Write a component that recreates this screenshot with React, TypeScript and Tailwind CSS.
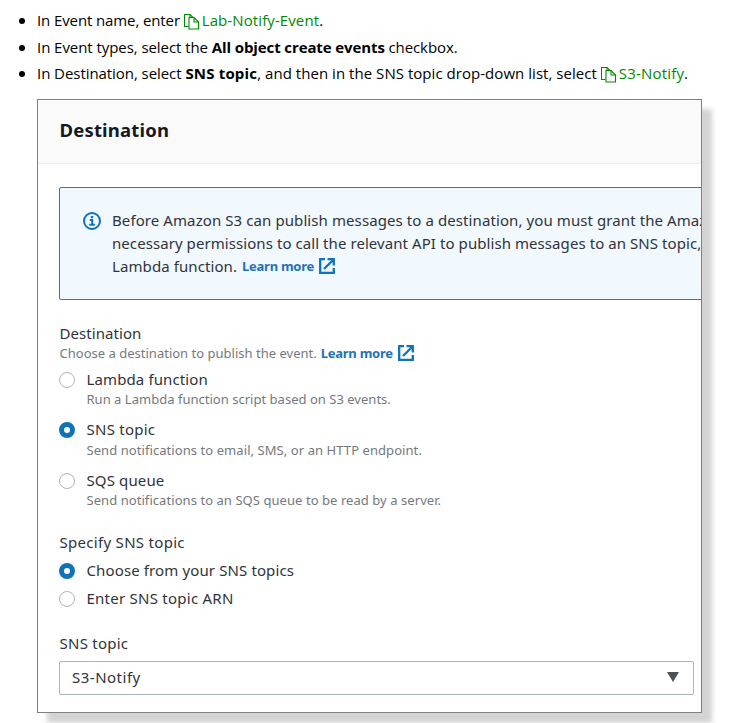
import type { ReactNode } from 'react';

function CopyIcon() {
  return (
    <svg
      className="mr-[2px] inline-block h-[17px] w-[16px] align-[-4px]"
      viewBox="0 0 16 17"
      fill="none"
      stroke="#008a00"
      strokeWidth="1.1"
    >
      <path d="M4.5 13.5H0.5V1.5H6L9 4.5" />
      <path d="M6 1.5V4.5" />
      <path d="M5 4.5H10L14.5 9V16H5Z" />
      <path d="M10 4.5V9H14.5" />
    </svg>
  );
}

function ExternalIcon() {
  return (
    <svg
      className="ml-[5px] h-4 w-4 shrink-0"
      viewBox="0 0 16 16"
      fill="none"
      stroke="#0f73bb"
      strokeWidth="2.3"
    >
      <path d="M6 1.2H1.2V14.8H14.8V10" />
      <path d="M8.5 1.2H14.8V7.5M14.8 1.2L5 11" />
    </svg>
  );
}

function InfoIcon() {
  return (
    <svg className="mt-[3px] h-[18px] w-[18px] shrink-0" viewBox="0 0 18 18" fill="none" stroke="#0f73bb">
      <circle cx="9" cy="9" r="8" strokeWidth="2" />
      <path d="M9 4V6.2" strokeWidth="2.4" />
      <path d="M6.8 8H9.2V12.8M6.3 12.8H11.9" strokeWidth="2" />
    </svg>
  );
}

function LearnMore() {
  return (
    <a className="flex items-center text-[13px] font-bold tracking-[-0.26px] text-[#1f72b4]">
      Learn more
      <ExternalIcon />
    </a>
  );
}

function Radio({ label, checked, hint }: { label: ReactNode; checked?: boolean; hint?: ReactNode }) {
  return (
    <div className="flex">
      <span
        className={
          checked
            ? 'mt-[3px] h-4 w-4 shrink-0 rounded-full border-[5px] border-[#0f73b5] bg-white'
            : 'mt-[3px] h-4 w-4 shrink-0 rounded-full border border-[#b0b6b7] bg-white'
        }
      />
      <div className="ml-[11.5px]">
        <div className="text-[15px] leading-[21px] tracking-[0.12px]">{label}</div>
        {hint && <div className="-mt-[0.6px] mb-[0.6px] text-[13px] leading-[20px] text-[#75797d]">{hint}</div>}
      </div>
    </div>
  );
}

function Bullet({ children, className }: { children: ReactNode; className: string }) {
  return (
    <li className={`flex items-center whitespace-pre ${className}`}>
      <span className="mt-[1px] mr-[12px] ml-[19px] h-[6px] w-[6px] rounded-full bg-black" />
      <div>{children}</div>
    </li>
  );
}

export default function App() {
  return (
    <div className="h-[723px] w-[743px] overflow-hidden bg-white pt-[7px] font-['Noto_Sans',sans-serif] text-black">
      <ul className="font-['Open_Sans','Noto_Sans',sans-serif] text-[15px]">
        <Bullet className="h-[27px] leading-[27px]">
          <span className="tracking-[-0.11px]">In Event name, enter </span>
          <span className="tracking-[0.1px] text-[#008a00]">
            <CopyIcon />
            Lab-Notify-Event
          </span>
          .
        </Bullet>
        <Bullet className="h-[26px] leading-[26px]">
          <span className="tracking-[-0.06px]">In Event types, select the </span>
          <b className="font-bold tracking-[-0.11px]">All object create events</b>
          <span className="tracking-[-0.1px]"> checkbox.</span>
        </Bullet>
        <Bullet className="h-[26px] leading-[26px]">
          <span className="tracking-[-0.06px]">In Destination, select </span>
          <b className="font-bold tracking-[0.18px]">SNS topic</b>
          <span className="tracking-[0.04px]">, and then in the SNS topic drop-down list, select </span>
          <span className="tracking-[0.18px] text-[#008a00]">
            <CopyIcon />
            S3-Notify
          </span>
          .
        </Bullet>
      </ul>

      <section className="mt-[13px] ml-[37px] h-[614px] w-[665px] border border-[#808080] bg-white text-[#30343a] shadow-[10px_10px_5px_#d3d3d3]">
        <div className="h-full overflow-hidden">
          <header className="flex h-[64px] items-center border-b border-[#eaeded] bg-[#fafafa] pb-[3px] pl-[21.5px]">
            <h2 className="text-[18.5px] leading-6 font-bold tracking-[0.18px] text-[#16191f]">Destination</h2>
          </header>

          <div className="mt-[23px] ml-[21px] flex h-[112.5px] w-[700px] rounded-[2px] border border-[#2180b4] bg-[#f1f8fe] pt-[21px] pl-[23px]">
            <InfoIcon />
            <div className="ml-[11px] text-[15px] leading-[22.6px] whitespace-nowrap">
              <p className="tracking-[0.09px]">
                Before Amazon S3 can publish messages to a destination, you must grant the Amaz
              </p>
              <p className="tracking-[0.07px]">
                necessary permissions to call the relevant API to publish messages to an SNS topic,
              </p>
              <p className="mt-[0.8px] flex gap-[5px] tracking-[0.09px]">
                Lambda function. <LearnMore />
              </p>
            </div>
          </div>

          <div className="pt-[22.5px] pl-[21px]">
            <div className="pl-[0.5px] text-[15px] leading-[22px] tracking-[0.06px]">Destination</div>
            <div className="-mt-[1px] flex gap-[4px] pl-[0.5px] text-[13px] leading-[20px] tracking-[0.01px] text-[#75797d]">
              Choose a destination to publish the event.
              <LearnMore />
            </div>
            <div className="mt-[5.7px] flex flex-col gap-[9.7px]">
              <Radio
                label="Lambda function"
                hint={<span className="tracking-[0.02px]">Run a Lambda function script based on S3 events.</span>}
              />
              <Radio
                checked
                label={<span className="tracking-[0.25px]">SNS topic</span>}
                hint={<span className="tracking-[0.07px]">Send notifications to email, SMS, or an HTTP endpoint.</span>}
              />
              <Radio
                label="SQS queue"
                hint={<span className="tracking-[0.06px]">Send notifications to an SQS queue to be read by a server.</span>}
              />
            </div>

            <div className="mt-[20.8px] pl-[0.5px] text-[15px] leading-[21px] tracking-[0.3px]">Specify SNS topic</div>
            <div className="mt-[7px] flex flex-col gap-[7px]">
              <Radio checked label="Choose from your SNS topics" />
              <Radio label={<span className="tracking-[0.25px]">Enter SNS topic ARN</span>} />
            </div>

            <div className="mt-[24px] pl-[0.5px] text-[15px] leading-[21px] tracking-[0.25px]">SNS topic</div>
            <div className="mt-[7px] flex h-[34px] w-[635px] items-center justify-between rounded-[2px] border border-[#aab7b8] pr-[14px] pb-[1px] pl-[12px] text-[15px] tracking-[0.5px]">
              S3-Notify
              <svg className="h-[10px] w-[12px]" viewBox="0 0 12 10" fill="#4b5259">
                <path d="M0 0H12L6 10Z" />
              </svg>
            </div>
          </div>
        </div>
      </section>
    </div>
  );
}
